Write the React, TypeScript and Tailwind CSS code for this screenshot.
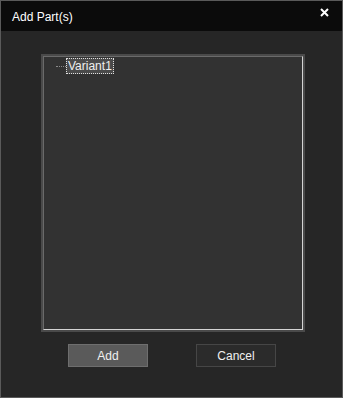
export default function App() {
  return (
    <div
      className="w-[343px] h-[398px] border border-[#5a5a5a] bg-[#262626] flex flex-col text-[12px]"
      style={{ fontFamily: '"Liberation Sans", Arial, sans-serif' }}
    >
      <div className="h-[30px] bg-[#0b0b0b] flex items-start justify-between shrink-0">
        <span className="text-white pl-[11px] pt-[8px] leading-[16px]">Add Part(s)</span>
        <svg width="9" height="9" viewBox="0 0 9 9" className="mt-[7px] mr-[13px]">
          <path d="M1 1L8 8M8 1L1 8" stroke="#ffffff" strokeWidth="2" />
        </svg>
      </div>
      <div className="flex-1 flex flex-col items-start pl-[40px] pt-[23px]">
        <div className="w-[264px] h-[278px] border-2 border-[#4a4a4a]">
          <div className="w-full h-full border border-t-[#6a6a6a] border-l-[#6a6a6a] border-b-[#d4d4d4] border-r-[#d4d4d4] bg-[#323232] pl-[12px] pt-[1px]">
            <div className="flex items-center">
              <span className="w-[10px] border-t border-dotted border-[#8a8a8a]" />
              <span className="border border-dotted border-[#e0e0e0] bg-[#4a4a4a] text-[#f0f0f0] px-[1px] leading-[14px]">
                Variant1
              </span>
            </div>
          </div>
        </div>
        <div className="flex gap-[48px] pl-[27px] pt-[12px]">
          <button className="w-[80px] h-[23px] bg-[#5a5a5a] border border-[#6e6e6e] text-[#f0f0f0]">
            Add
          </button>
          <button className="w-[80px] h-[23px] bg-[#2b2b2b] border border-[#464646] text-[#f0f0f0]">
            Cancel
          </button>
        </div>
      </div>
    </div>
  );
}
